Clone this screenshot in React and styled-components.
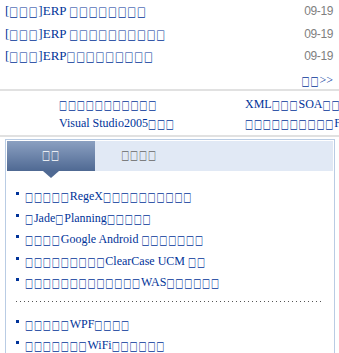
import React from "react";
import styled, { createGlobalStyle } from "styled-components";

// the source page lost its CJK font, every missing glyph shows as a box: □ stands for it
const GlobalStyle = createGlobalStyle`
  html, body {
    margin: 0;
    padding: 0;
    overflow: hidden;
    background: #fff;
  }
  body {
    font-family: "Liberation Serif", serif;
    font-size: 12px;
    color: #039;
  }
`;

const Page = styled.div`
  width: 339px;
`;

const Tofu = styled.span`
  display: inline-block;
  font-family: "DejaVu Sans", sans-serif;
  font-size: 0.72em;
  line-height: 1;
  letter-spacing: 0.09em;
  transform: scaleY(1.4);
`;

const txt = (s) =>
  s.split(/(□+)/).map((p, i) =>
    p.startsWith("□") ? <Tofu key={i}>{p}</Tofu> : p
  );

const NewsList = styled.div`
  padding: 0 5px;
`;

const NewsRow = styled.div`
  display: flex;
  justify-content: space-between;
  align-items: center;
  height: 22.5px;
  white-space: nowrap;
`;

const Link = styled.a`
  color: #039;
  text-decoration: none;
  font-size: ${(p) => p.$size || 12}px;
`;

const Date = styled.span`
  font-family: "Liberation Sans", sans-serif;
  font-size: 12px;
  letter-spacing: -0.4px;
  color: #7f7f7f;
  padding-right: 1px;
`;

const More = styled.div`
  text-align: right;
  height: 21.5px;
  line-height: 24px;
  padding-right: 1px;
`;

const Block = styled.div`
  border-top: 2px solid #e1e1e1;
  border-bottom: 2px solid #e1e1e1;
  padding: 3.5px 0 2.5px 59px;
`;

const Cols = styled.div`
  display: grid;
  grid-template-columns: 186px 186px;
  grid-auto-rows: 19px;
  align-items: center;
  white-space: nowrap;
`;

const TabBox = styled.div`
  margin: 2px 0 0 5px;
  width: 326px;
  border: 1px solid #b9cce4;
  padding: 1px;
`;

const TabBar = styled.div`
  display: flex;
  height: 30px;
  background: #e1e9f5;
`;

const Tab = styled.div`
  position: relative;
  width: 88px;
  display: flex;
  align-items: center;
  justify-content: center;
  padding-bottom: 1px;
  color: ${(p) => (p.$active ? "#fff" : "#666")};
  background: ${(p) =>
    p.$active ? "linear-gradient(#8ba0c1, #4f6993)" : "transparent"};

  &::after {
    content: "";
    display: ${(p) => (p.$active ? "block" : "none")};
    position: absolute;
    left: 36px;
    bottom: -7px;
    border-left: 8px solid transparent;
    border-right: 8px solid transparent;
    border-top: 7px solid #4f6993;
  }
`;

const List = styled.ul`
  list-style: none;
  margin: 0;
  padding: 15px 0 0 9px;
`;

const Item = styled.li`
  display: flex;
  align-items: flex-start;
  line-height: 21.5px;
  white-space: nowrap;

  &::before {
    content: "";
    flex: none;
    width: 3px;
    height: 3px;
    margin: 6px 6px 0 0;
    background: #039;
  }
`;

const Dots = styled.li`
  height: 1px;
  margin: 7px 11px 12px 0;
  background: repeating-linear-gradient(
    to right,
    #555 0 1px,
    transparent 1px 4px
  );
`;

const news = [
  "[□□□]ERP □□□□□□□□",
  "[□□□]ERP □□□□□□□□□□",
  "[□□□]ERP□□□□□□□□□",
];

const cols = [
  "□□□□□□□□□□□",
  "XML□□□SOA□□",
  "Visual Studio2005□□□",
  "□□□□□□□□□□Flex□□",
];

const top = [
  "□□□□□RegeX□□□□□□□□□□",
  "□Jade□Planning□□□□□",
  "□□□□Google Android □□□□□□□",
  "□□□□□□□□□ClearCase UCM □□",
  "□□□□□□□□□□□□□WAS□□□□□□",
];

const bottom = ["□□□□□WPF□□□□", "□□□□□□□WiFi□□□□□□"];

export default function App() {
  return (
    <Page>
      <GlobalStyle />
      <NewsList>
        {news.map((n, i) => (
          <NewsRow key={i}>
            <Link href="#" $size={13}>
              {txt(n)}
            </Link>
            <Date>09-19</Date>
          </NewsRow>
        ))}
        <More>
          <Link href="#">{txt("□□>>")}</Link>
        </More>
      </NewsList>

      <Block>
        <Cols>
          {cols.map((c, i) => (
            <Link key={i} href="#">
              {txt(c)}
            </Link>
          ))}
        </Cols>
      </Block>

      <TabBox>
        <TabBar>
          <Tab $active>{txt("□ □")}</Tab>
          <Tab>{txt("□□□□")}</Tab>
        </TabBar>
        <List>
          {top.map((t, i) => (
            <Item key={i}>
              <Link href="#">{txt(t)}</Link>
            </Item>
          ))}
          <Dots />
          {bottom.map((t, i) => (
            <Item key={i}>
              <Link href="#">{txt(t)}</Link>
            </Item>
          ))}
        </List>
      </TabBox>
    </Page>
  );
}
